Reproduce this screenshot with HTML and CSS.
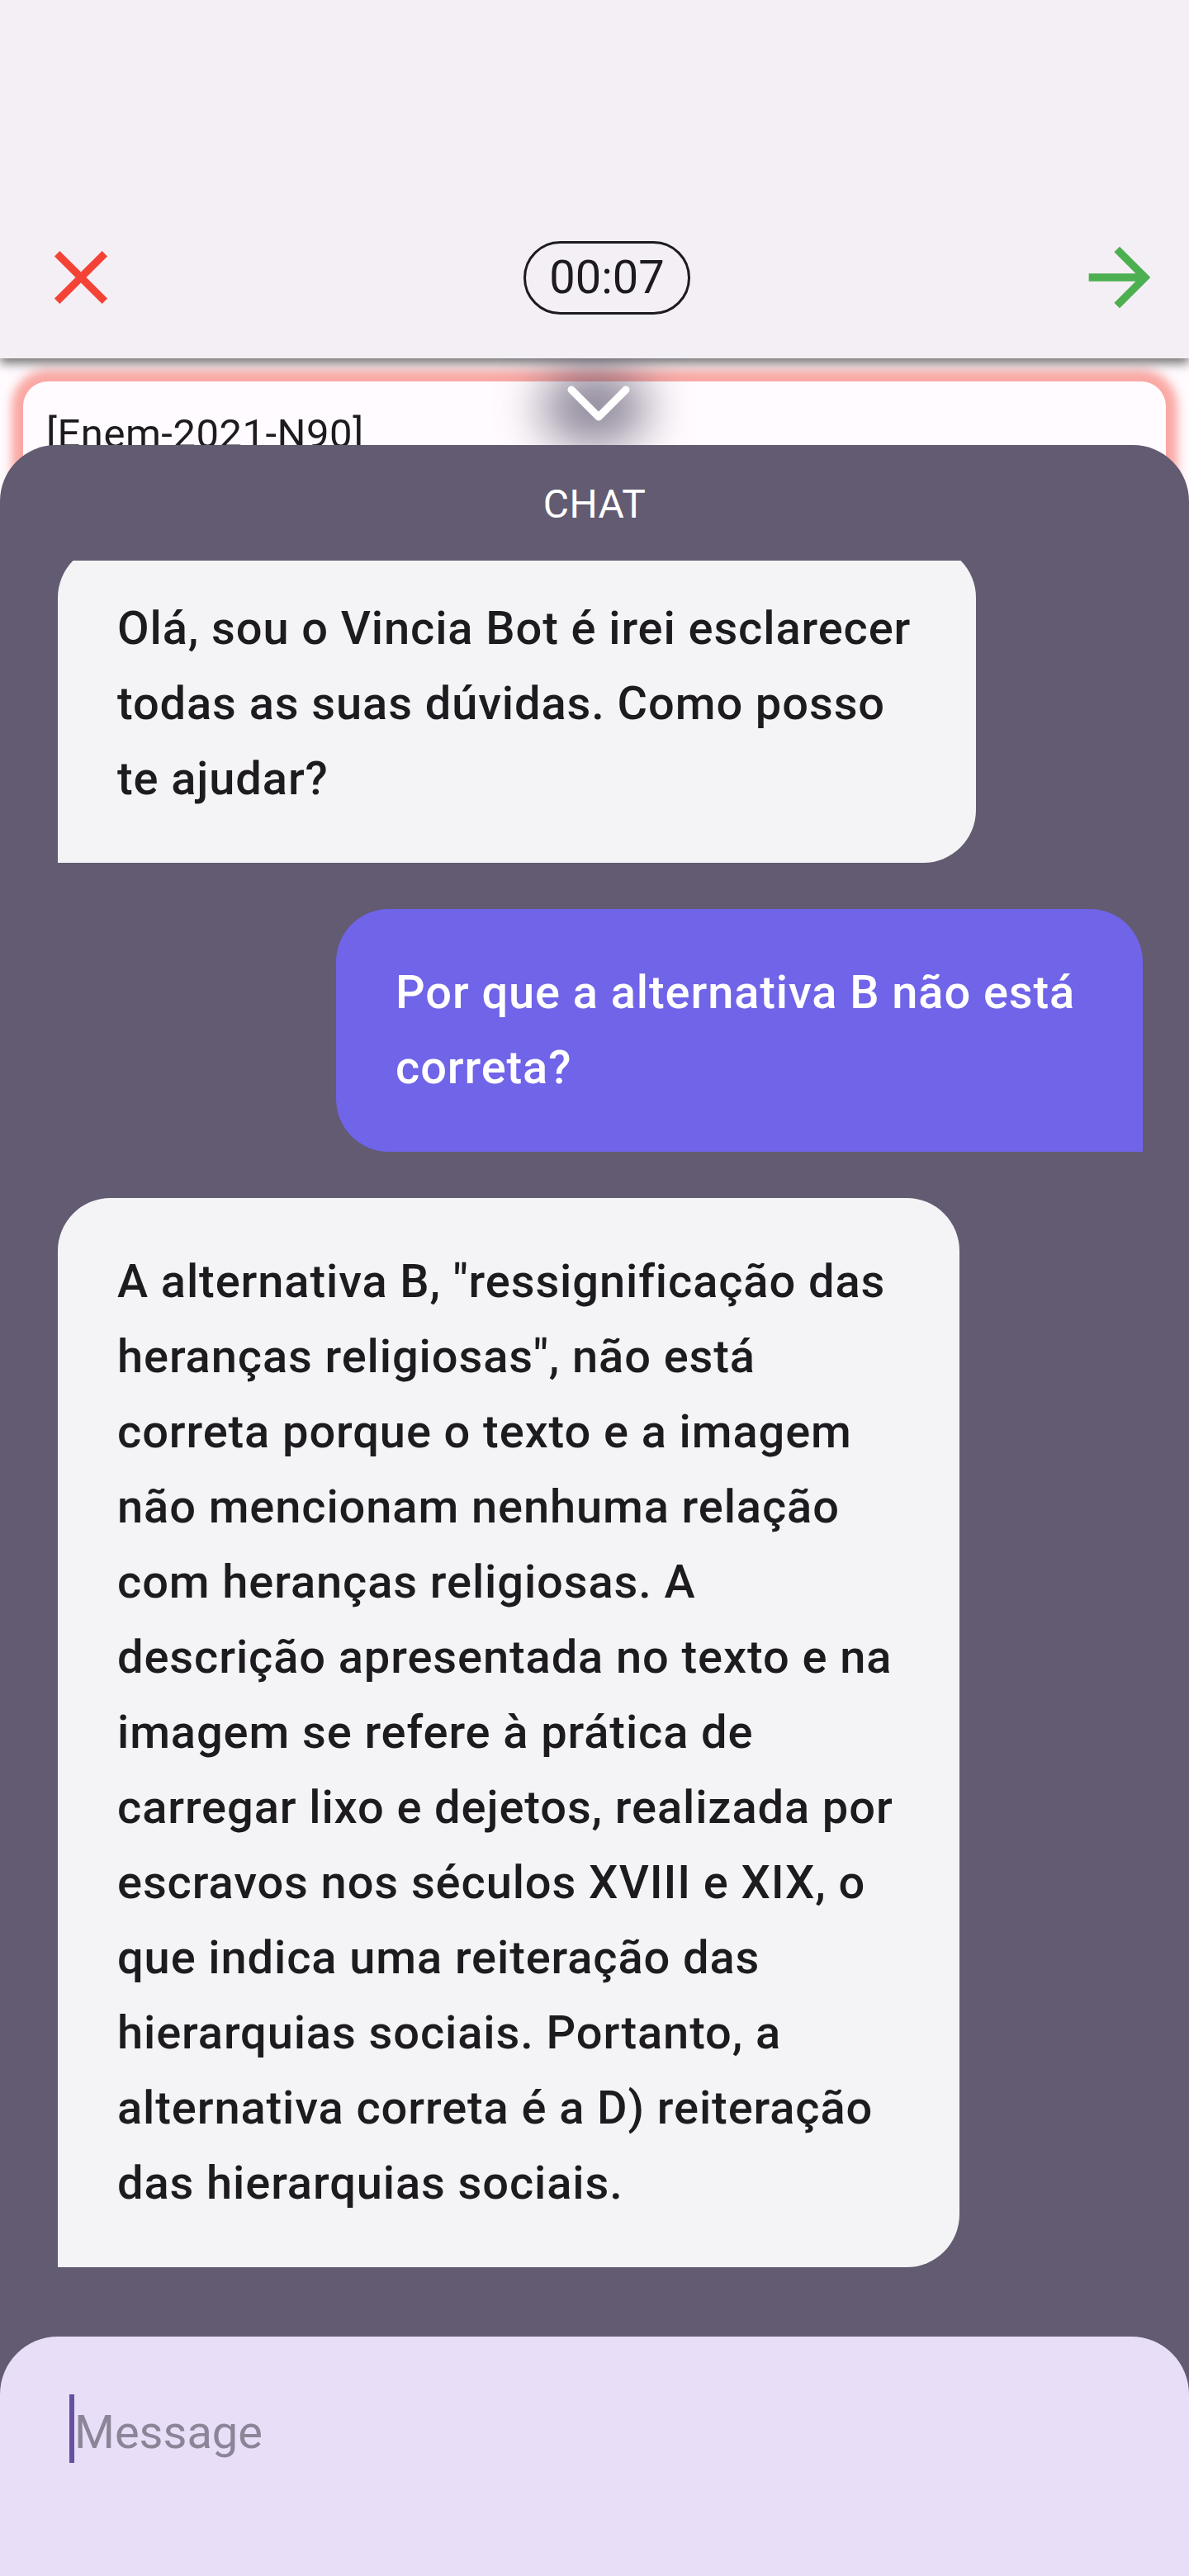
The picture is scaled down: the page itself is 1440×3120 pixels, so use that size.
FILE: index.html
```html
<!DOCTYPE html>
<html lang="pt-BR">
<head>
<meta charset="utf-8">
<title>Questão – Chat</title>
<link rel="stylesheet" href="styles.css">
</head>
<body>
<div class="screen">
  <header class="topbar">
    <svg class="icon icon--close" viewBox="0 0 24 24" width="110" height="110" aria-label="Fechar">
      <path d="M19 6.41L17.59 5 12 10.59 6.41 5 5 6.41 10.59 12 5 17.59 6.41 19 12 13.41 17.59 19 19 17.59 13.41 12z"/>
    </svg>
    <div class="timer">00:07</div>
    <svg class="icon icon--next" viewBox="0 0 24 24" width="112" height="112" aria-label="Próxima">
      <path d="M12 4l-1.41 1.41L16.17 11H4v2h12.17l-5.58 5.59L12 20l8-8z"/>
    </svg>
  </header>

  <section class="question-card">
    <p class="question-code">[Enem-2021-N90]</p>
  </section>

  <div class="sheet-handle">
    <div class="sheet-handle__shadow"></div>
    <svg class="sheet-handle__chevron" viewBox="0 0 90 60" width="90" height="60">
      <polyline points="17,11 50,44 83,11"/>
    </svg>
  </div>

  <section class="chat-sheet">
    <h2 class="chat-title">CHAT</h2>
    <div class="messages">
      <div class="bubble bubble--bot bubble--first">Olá, sou o Vincia Bot é irei esclarecer todas as suas dúvidas. Como posso te ajudar?</div>
      <div class="bubble bubble--user">Por que a alternativa B não está correta?</div>
      <div class="bubble bubble--bot bubble--long">A alternativa B, "ressignificação das heranças religiosas", não está correta porque o texto e a imagem não mencionam nenhuma relação com heranças religiosas. A descrição apresentada no texto e na imagem se refere à prática de carregar lixo e dejetos, realizada por escravos nos séculos XVIII e XIX, o que indica uma reiteração das hierarquias sociais. Portanto, a alternativa correta é a D) reiteração das hierarquias sociais.</div>
    </div>
    <div class="composer">
      <span class="composer__caret"></span>
      <span class="composer__placeholder">Message</span>
    </div>
  </section>
</div>
</body>
</html>
```

FILE: styles.css
```css
* {
  box-sizing: border-box;
}

html, body {
  margin: 0;
  padding: 0;
}

body {
  width: 1440px;
  height: 3120px;
  overflow: hidden;
  background: #fffbfe;
  font-family: Roboto, "Noto Sans", "Liberation Sans", sans-serif;
  color: #1d1b20;
}

.screen {
  position: relative;
  width: 1440px;
  height: 3120px;
  overflow: hidden;
  background: #fffbfe;
}

/* ---------- top bar ---------- */
.topbar {
  position: relative;
  z-index: 2;
  height: 434px;
  padding: 238px 28px 0 43px;
  display: flex;
  align-items: center;
  justify-content: space-between;
  background: #f3eff5;
  box-shadow: 0 6px 12px rgba(0, 0, 0, 0.55);
}

.icon {
  display: block;
  flex-shrink: 0;
}

.icon--close path {
  fill: #f44336;
}

.icon--next path {
  fill: #4caf50;
}

.timer {
  margin-left: 17px;
  width: 202px;
  height: 89px;
  border: 3px solid #1d1b20;
  border-radius: 999px;
  display: flex;
  align-items: center;
  justify-content: center;
  font-size: 56px;
  font-weight: 400;
  color: #1d1b20;
}

/* ---------- question card ---------- */
.question-card {
  position: relative;
  z-index: 1;
  margin: 28px 28px 0;
  height: 420px;
  padding: 35px 28px;
  background: #fffbfe;
  border-radius: 30px;
  box-shadow: 0 0 12px 14px rgba(244, 67, 54, 0.45);
}

.question-code {
  margin: 0;
  font-size: 49px;
  font-weight: 400;
  letter-spacing: 0.5px;
  line-height: normal;
  color: #1d1b20;
}

/* ---------- sheet handle (overlay) ---------- */
.sheet-handle {
  position: absolute;
  z-index: 3;
  top: 434px;
  left: 520px;
  width: 400px;
  height: 105px;
  overflow: hidden;
}

.sheet-handle__shadow {
  position: absolute;
  left: 135px;
  top: 12px;
  width: 130px;
  height: 95px;
  border-radius: 50%;
  background: rgba(72, 64, 92, 0.62);
  filter: blur(28px);
}

.sheet-handle__chevron {
  position: absolute;
  left: 155px;
  top: 27px;
}

.sheet-handle__chevron polyline {
  fill: none;
  stroke: #ffffff;
  stroke-width: 9;
  stroke-linecap: round;
  stroke-linejoin: round;
}

/* ---------- chat sheet (bottom sheet overlay) ---------- */
.chat-sheet {
  position: absolute;
  z-index: 4;
  top: 539px;
  left: 0;
  right: 0;
  bottom: 0;
  display: flex;
  flex-direction: column;
  background: #625b71;
  border-radius: 68px 68px 0 0;
  overflow: hidden;
}

.chat-title {
  flex-shrink: 0;
  margin: 0;
  height: 140px;
  padding-top: 48px;
  font-size: 48px;
  line-height: 48px;
  font-weight: 400;
  letter-spacing: 0.4px;
  text-align: center;
  color: #ffffff;
}

.messages {
  flex: 1;
  min-height: 0;
  overflow: hidden;
  padding: 0 56px 0 70px;
  display: flex;
  flex-direction: column;
  align-items: flex-start;
  gap: 56px;
}

.bubble {
  flex-shrink: 0;
  padding: 56px 64px 56px 72px;
  font-size: 56px;
  line-height: 91px;
  font-weight: 500;
  letter-spacing: 0.9px;
}

.bubble--bot {
  background: #f4f4f6;
  color: #1d1b20;
  border-radius: 64px 64px 64px 0;
}

.bubble--user {
  align-self: flex-end;
  width: 977px;
  background: #7064e8;
  color: #ffffff;
  border-radius: 64px 64px 0 64px;
}

.bubble--first {
  width: 1112px;
  margin-top: -19px;
}

.bubble--long {
  width: 1092px;
}

/* ---------- composer ---------- */
.composer {
  flex-shrink: 0;
  height: 290px;
  padding: 70px 0 0 84px;
  display: flex;
  align-items: flex-start;
  background: #e8def8;
  border-radius: 70px 70px 0 0;
}

.composer__caret {
  display: block;
  width: 6px;
  height: 83px;
  background: #6750a4;
}

.composer__placeholder {
  font-size: 56px;
  line-height: 92px;
  font-weight: 400;
  color: #8c8597;
}
```
